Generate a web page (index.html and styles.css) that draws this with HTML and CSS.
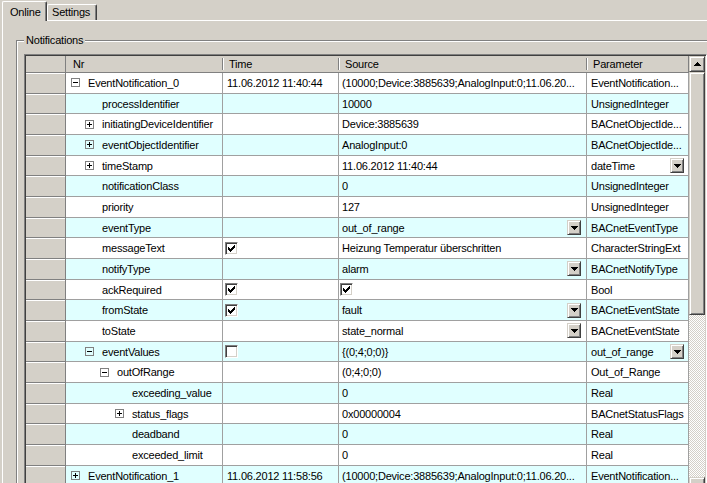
FILE: index.html
```html
<!DOCTYPE html>
<html lang="de">
<head>
<meta charset="utf-8">
<title>Notifications</title>
<link rel="stylesheet" href="styles.css">
</head>
<body>
<div class="tabs">
  <div class="tab active">Online</div>
  <div class="tab inactive">Settings</div>
</div>
<div class="panel">
  <fieldset class="group">
    <legend>Notifications</legend>
    <div class="grid">
      <div class="table">
        <div class="row head">
          <div class="rh"></div>
          <div class="c nr">Nr</div>
          <div class="c time">Time</div>
          <div class="c src">Source</div>
          <div class="c par">Parameter</div>
        </div>

        <div class="row w">
          <div class="rh"></div>
          <div class="c nr l0"><span class="exp minus"></span>EventNotification_0</div>
          <div class="c time">11.06.2012 11:40:44</div>
          <div class="c src">(10000;Device:3885639;AnalogInput:0;11.06.20...</div>
          <div class="c par">EventNotification...</div>
        </div>
        <div class="row b">
          <div class="rh"></div>
          <div class="c nr l1"><span class="exp none"></span>processIdentifier</div>
          <div class="c time"></div>
          <div class="c src">10000</div>
          <div class="c par">UnsignedInteger</div>
        </div>
        <div class="row w">
          <div class="rh"></div>
          <div class="c nr l1"><span class="exp plus"></span>initiatingDeviceIdentifier</div>
          <div class="c time"></div>
          <div class="c src">Device:3885639</div>
          <div class="c par">BACnetObjectIde...</div>
        </div>
        <div class="row b">
          <div class="rh"></div>
          <div class="c nr l1"><span class="exp plus"></span>eventObjectIdentifier</div>
          <div class="c time"></div>
          <div class="c src">AnalogInput:0</div>
          <div class="c par">BACnetObjectIde...</div>
        </div>
        <div class="row w">
          <div class="rh"></div>
          <div class="c nr l1"><span class="exp plus"></span>timeStamp</div>
          <div class="c time"></div>
          <div class="c src">11.06.2012 11:40:44</div>
          <div class="c par">dateTime<span class="dd raised"><svg width="7" height="4"><path d="M0 0h7v1h-1v1h-1v1h-1v1h-1v-1h-1v-1h-1v-1h-1z"/></svg></span></div>
        </div>
        <div class="row b">
          <div class="rh"></div>
          <div class="c nr l1"><span class="exp none"></span>notificationClass</div>
          <div class="c time"></div>
          <div class="c src">0</div>
          <div class="c par">UnsignedInteger</div>
        </div>
        <div class="row w">
          <div class="rh"></div>
          <div class="c nr l1"><span class="exp none"></span>priority</div>
          <div class="c time"></div>
          <div class="c src">127</div>
          <div class="c par">UnsignedInteger</div>
        </div>
        <div class="row b">
          <div class="rh"></div>
          <div class="c nr l1"><span class="exp none"></span>eventType</div>
          <div class="c time"></div>
          <div class="c src">out_of_range<span class="dd raised"><svg width="7" height="4"><path d="M0 0h7v1h-1v1h-1v1h-1v1h-1v-1h-1v-1h-1v-1h-1z"/></svg></span></div>
          <div class="c par">BACnetEventType</div>
        </div>
        <div class="row w">
          <div class="rh"></div>
          <div class="c nr l1"><span class="exp none"></span>messageText</div>
          <div class="c time"><span class="chk"><svg width="7" height="7"><path d="M0 2h1v1h1v1h1v-1h1v-1h1v-1h1v-1h1v3h-1v1h-1v1h-1v1h-1v1h-1v-1h-1v-1h-1v-1h-1z"/></svg></span></div>
          <div class="c src">Heizung Temperatur überschritten</div>
          <div class="c par">CharacterStringExt</div>
        </div>
        <div class="row b">
          <div class="rh"></div>
          <div class="c nr l1"><span class="exp none"></span>notifyType</div>
          <div class="c time"></div>
          <div class="c src">alarm<span class="dd raised"><svg width="7" height="4"><path d="M0 0h7v1h-1v1h-1v1h-1v1h-1v-1h-1v-1h-1v-1h-1z"/></svg></span></div>
          <div class="c par">BACnetNotifyType</div>
        </div>
        <div class="row w">
          <div class="rh"></div>
          <div class="c nr l1"><span class="exp none"></span>ackRequired</div>
          <div class="c time"><span class="chk"><svg width="7" height="7"><path d="M0 2h1v1h1v1h1v-1h1v-1h1v-1h1v-1h1v3h-1v1h-1v1h-1v1h-1v1h-1v-1h-1v-1h-1v-1h-1z"/></svg></span></div>
          <div class="c src"><span class="chk"><svg width="7" height="7"><path d="M0 2h1v1h1v1h1v-1h1v-1h1v-1h1v-1h1v3h-1v1h-1v1h-1v1h-1v1h-1v-1h-1v-1h-1v-1h-1z"/></svg></span></div>
          <div class="c par">Bool</div>
        </div>
        <div class="row b">
          <div class="rh"></div>
          <div class="c nr l1"><span class="exp none"></span>fromState</div>
          <div class="c time"><span class="chk"><svg width="7" height="7"><path d="M0 2h1v1h1v1h1v-1h1v-1h1v-1h1v-1h1v3h-1v1h-1v1h-1v1h-1v1h-1v-1h-1v-1h-1v-1h-1z"/></svg></span></div>
          <div class="c src">fault<span class="dd raised"><svg width="7" height="4"><path d="M0 0h7v1h-1v1h-1v1h-1v1h-1v-1h-1v-1h-1v-1h-1z"/></svg></span></div>
          <div class="c par">BACnetEventState</div>
        </div>
        <div class="row w">
          <div class="rh"></div>
          <div class="c nr l1"><span class="exp none"></span>toState</div>
          <div class="c time"></div>
          <div class="c src">state_normal<span class="dd raised"><svg width="7" height="4"><path d="M0 0h7v1h-1v1h-1v1h-1v1h-1v-1h-1v-1h-1v-1h-1z"/></svg></span></div>
          <div class="c par">BACnetEventState</div>
        </div>
        <div class="row b">
          <div class="rh"></div>
          <div class="c nr l1"><span class="exp minus"></span>eventValues</div>
          <div class="c time"><span class="chk"></span></div>
          <div class="c src">{(0;4;0;0)}</div>
          <div class="c par">out_of_range<span class="dd raised"><svg width="7" height="4"><path d="M0 0h7v1h-1v1h-1v1h-1v1h-1v-1h-1v-1h-1v-1h-1z"/></svg></span></div>
        </div>
        <div class="row w">
          <div class="rh"></div>
          <div class="c nr l2"><span class="exp minus"></span>outOfRange</div>
          <div class="c time"></div>
          <div class="c src">(0;4;0;0)</div>
          <div class="c par">Out_of_Range</div>
        </div>
        <div class="row b">
          <div class="rh"></div>
          <div class="c nr l3"><span class="exp none"></span>exceeding_value</div>
          <div class="c time"></div>
          <div class="c src">0</div>
          <div class="c par">Real</div>
        </div>
        <div class="row w">
          <div class="rh"></div>
          <div class="c nr l3"><span class="exp plus"></span>status_flags</div>
          <div class="c time"></div>
          <div class="c src">0x00000004</div>
          <div class="c par">BACnetStatusFlags</div>
        </div>
        <div class="row b">
          <div class="rh"></div>
          <div class="c nr l3"><span class="exp none"></span>deadband</div>
          <div class="c time"></div>
          <div class="c src">0</div>
          <div class="c par">Real</div>
        </div>
        <div class="row w">
          <div class="rh"></div>
          <div class="c nr l3"><span class="exp none"></span>exceeded_limit</div>
          <div class="c time"></div>
          <div class="c src">0</div>
          <div class="c par">Real</div>
        </div>
        <div class="row b">
          <div class="rh"></div>
          <div class="c nr l0"><span class="exp plus"></span>EventNotification_1</div>
          <div class="c time">11.06.2012 11:58:56</div>
          <div class="c src">(10000;Device:3885639;AnalogInput:0;11.06.20...</div>
          <div class="c par">EventNotification...</div>
        </div>
      </div>
      <div class="vscroll">
        <div class="sb-btn raised"><svg width="7" height="4"><path d="M3 0h1v1h1v1h1v1h1v1h-7v-1h1v-1h1v-1h1z"/></svg></div>
        <div class="thumb raised"></div>
        <div class="track"></div>
        <div class="sb-btn raised"><svg width="7" height="4"><path d="M0 0h7v1h-1v1h-1v1h-1v1h-1v-1h-1v-1h-1v-1h-1z"/></svg></div>
      </div>
    </div>
  </fieldset>
</div>
</body>
</html>
```

FILE: styles.css
```css
html, body {
  margin: 0;
  height: 100%;
  overflow: hidden;
}

body {
  background: #d4d0c8;
  font-family: "Liberation Sans", Arial, sans-serif;
  font-size: 11px;
  letter-spacing: -0.2px;
  color: #000;
}

svg {
  display: block;
  shape-rendering: crispEdges;
}

/* ---------- tabs ---------- */
.tabs {
  display: flex;
  align-items: flex-end;
  height: 20px;
  padding-left: 2px;
}

.tab {
  box-sizing: border-box;
  background: #d4d0c8;
  border-left: 1px solid #fff;
  border-top: 1px solid #fff;
  border-right: 1px solid #404040;
  box-shadow: inset -1px 0 #808080;
  border-radius: 2px 2px 0 0;
  line-height: 13px;
  white-space: nowrap;
}

.tab.active {
  width: 45px;
  height: 20px;
  margin-bottom: -1px;
  padding: 4px 0 0 7px;
  position: relative;
  z-index: 1;
}

.tab.inactive {
  width: 50px;
  height: 16px;
  padding: 1px 0 0 4px;
}

/* ---------- panel & group ---------- */
.panel {
  margin-left: 2px;
  border-top: 1px solid #fff;
  border-left: 1px solid #fff;
  height: 520px;
}

.group {
  box-sizing: border-box;
  width: 740px;
  min-width: 0;
  margin: 13px 0 0 13px;
  padding: 7px 0 0 7px;
  border: 1px solid #808080;
  box-shadow: inset 1px 1px #fff;
}

.group legend {
  margin: 0;
  padding: 0 2px;
  line-height: 13px;
  background: #d4d0c8;
}

/* ---------- grid ---------- */
.grid {
  display: flex;
  width: fit-content;
  border: 1px solid;
  border-color: #808080 #fff #fff #808080;
  padding: 1px;
  box-shadow: inset 1px 1px #404040, inset -1px -1px #d4d0c8;
  background: #fff;
}

.table {
  flex: none;
  width: 663px;
  height: 437px;
  overflow: hidden;
}

.row {
  display: grid;
  grid-template-columns: 40px 157px 116px 248px 102px;
  height: 20.68px;
}

.row.w { background: #fff; }
.row.b { background: #e0ffff; }

.rh {
  background: #d4d0c8;
  border-right: 1px solid #808080;
  border-bottom: 1px solid #808080;
  box-shadow: inset 0 1px #fff;
}

.c {
  display: flex;
  align-items: center;
  min-width: 0;
  overflow: hidden;
  white-space: nowrap;
  border-right: 1px solid #a0a0a0;
  border-bottom: 1px solid #a0a0a0;
}

.nr.l0 { padding-left: 5px; }
.nr.l1 { padding-left: 19px; }
.nr.l2 { padding-left: 34px; }
.nr.l3 { padding-left: 49px; }
.time { padding-left: 4px; }
.src { padding-left: 3px; }
.par { padding-left: 4px; }

/* header */
.row.head { height: 17px; }

.head .rh {
  box-shadow: none;
}

.head .c {
  padding-left: 6px;
  border-right: none;
  border-bottom-color: #808080;
  background-color: #d4d0c8;
  background-repeat: no-repeat;
  background-size: 1px 12px;
}

.head .nr {
  padding-left: 7px;
  background-image: linear-gradient(#808080, #808080);
  background-position: right 0 top 2px;
}

.head .time,
.head .src {
  background-image: linear-gradient(#808080, #808080), linear-gradient(#fff, #fff);
  background-position: right 0 top 2px, left 0 top 2px;
}

.head .par {
  border-right: 1px solid #808080;
  background-image: linear-gradient(#fff, #fff);
  background-position: left 0 top 2px;
}

/* tree expander */
.exp {
  flex: none;
  box-sizing: border-box;
  width: 9px;
  height: 9px;
  margin-right: 8px;
  border: 1px solid #808080;
  background-repeat: no-repeat;
}

.exp.none { border-color: transparent; }

.exp.minus {
  background-image: linear-gradient(#000, #000);
  background-position: center;
  background-size: 5px 1px;
}

.exp.plus {
  background-image: linear-gradient(#000, #000), linear-gradient(#000, #000);
  background-position: center, center;
  background-size: 5px 1px, 1px 5px;
}

/* raised 3d look */
.raised {
  box-sizing: border-box;
  background: #d4d0c8;
  border: 1px solid;
  border-color: #d4d0c8 #404040 #404040 #d4d0c8;
  box-shadow: inset 1px 1px #fff, inset -1px -1px #808080;
}

.dd {
  flex: none;
  width: 14px;
  height: 15px;
  margin-left: auto;
  margin-right: 5px;
  display: flex;
  align-items: center;
  justify-content: center;
}

.par .dd { margin-right: 4px; }

/* checkbox */
.chk {
  flex: none;
  box-sizing: border-box;
  width: 13px;
  height: 13px;
  margin-left: -2px;
  border: 1px solid;
  border-color: #808080 #fff #fff #808080;
  box-shadow: inset 1px 1px #404040, inset -1px -1px #d4d0c8;
  background: #fff;
  display: flex;
  align-items: center;
  justify-content: center;
}

/* scrollbar */
.vscroll {
  flex: none;
  width: 16px;
  height: 437px;
  display: flex;
  flex-direction: column;
}

.sb-btn {
  flex: none;
  height: 16px;
  display: flex;
  align-items: center;
  justify-content: center;
}

.thumb {
  flex: none;
  height: 243px;
}

.track {
  flex: 1;
  background: conic-gradient(#fff 25%, #d4d0c8 0 50%, #fff 0 75%, #d4d0c8 0) 0 0 / 2px 2px;
}
```
